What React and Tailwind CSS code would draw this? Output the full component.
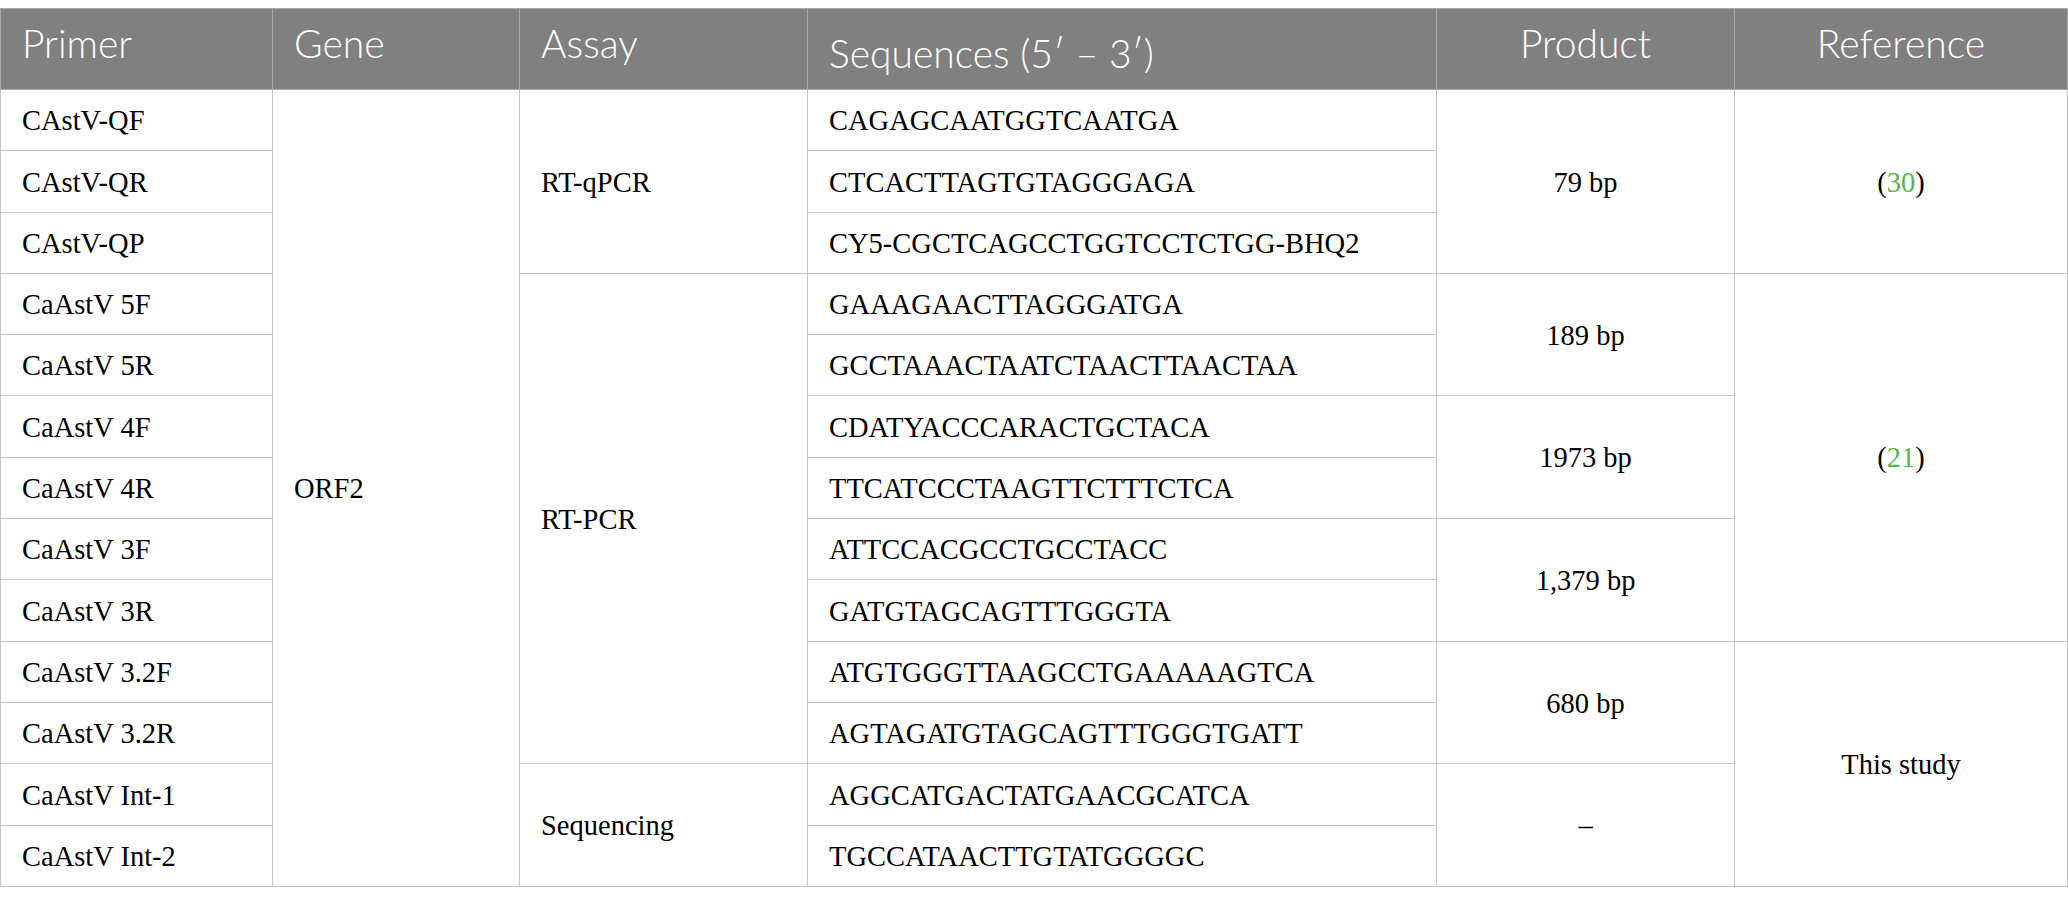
const rows = [
  { primer: "CAstV-QF", seq: "CAGAGCAATGGTCAATGA" },
  { primer: "CAstV-QR", seq: "CTCACTTAGTGTAGGGAGA" },
  { primer: "CAstV-QP", seq: "CY5-CGCTCAGCCTGGTCCTCTGG-BHQ2" },
  { primer: "CaAstV 5F", seq: "GAAAGAACTTAGGGATGA" },
  { primer: "CaAstV 5R", seq: "GCCTAAACTAATCTAACTTAACTAA" },
  { primer: "CaAstV 4F", seq: "CDATYACCCARACTGCTACA" },
  { primer: "CaAstV 4R", seq: "TTCATCCCTAAGTTCTTTCTCA" },
  { primer: "CaAstV 3F", seq: "ATTCCACGCCTGCCTACC" },
  { primer: "CaAstV 3R", seq: "GATGTAGCAGTTTGGGTA" },
  { primer: "CaAstV 3.2F", seq: "ATGTGGGTTAAGCCTGAAAAAGTCA" },
  { primer: "CaAstV 3.2R", seq: "AGTAGATGTAGCAGTTTGGGTGATT" },
  { primer: "CaAstV Int-1", seq: "AGGCATGACTATGAACGCATCA" },
  { primer: "CaAstV Int-2", seq: "TGCCATAACTTGTATGGGGC" },
];

// cells that start a span, keyed by row index
const assay = { 0: ["RT-qPCR", 3], 3: ["RT-PCR", 8], 11: ["Sequencing", 2] };
const product = {
  0: ["79 bp", 3],
  3: ["189 bp", 2],
  5: ["1973 bp", 2],
  7: ["1,379 bp", 2],
  9: ["680 bp", 2],
  11: ["–", 2],
};
const reference = {
  0: [<>(<span className="text-[#55b64e]">30</span>)</>, 3],
  3: [<>(<span className="text-[#55b64e]">21</span>)</>, 6],
  9: ["This study", 4],
};

const th = "border border-[#a9a9a9] bg-[#7f807f] text-white font-light align-top text-[39px] leading-[44px]";
const td = "border border-[#c4c4c4] h-[61.3px] align-middle pt-[3px] pb-0";

export default function App() {
  return (
    <div className="w-[2068px] h-[906px] bg-white pt-[8px]">
      <table
        className="w-[2067px] table-fixed border-collapse text-black"
        style={{ fontFamily: "'Liberation Serif', serif" }}
      >
        <colgroup>
          <col className="w-[272px]" />
          <col className="w-[247px]" />
          <col className="w-[288px]" />
          <col className="w-[629px]" />
          <col className="w-[298px]" />
          <col className="w-[333px]" />
        </colgroup>
        <thead style={{ fontFamily: "Lato, 'Open Sans', sans-serif" }}>
          <tr className="h-[81px]">
            <th className={`${th} text-left pl-[21px] pt-[12px]`}>Primer</th>
            <th className={`${th} text-left pl-[21px] pt-[12px]`}>Gene</th>
            <th className={`${th} text-left pl-[21px] pt-[12px]`}>Assay</th>
            <th className={`${th} text-left pl-[21px] pt-[22px]`}>Sequences (5′ – 3′)</th>
            <th className={`${th} text-center pt-[12px]`}>Product</th>
            <th className={`${th} text-center pt-[12px]`}>Reference</th>
          </tr>
        </thead>
        <tbody className="text-[28.5px]">
          {rows.map((r, i) => (
            <tr key={r.primer}>
              <td className={`${td} pl-[21px]`}>{r.primer}</td>
              {i === 0 && (
                <td rowSpan={13} className={`${td} pl-[21px]`}>
                  ORF2
                </td>
              )}
              {assay[i] && (
                <td rowSpan={assay[i][1]} className={`${td} pl-[21px]`}>
                  {assay[i][0]}
                </td>
              )}
              <td className={`${td} pl-[21px]`}>{r.seq}</td>
              {product[i] && (
                <td rowSpan={product[i][1]} className={`${td} text-center`}>
                  {product[i][0]}
                </td>
              )}
              {reference[i] && (
                <td rowSpan={reference[i][1]} className={`${td} text-center`}>
                  {reference[i][0]}
                </td>
              )}
            </tr>
          ))}
        </tbody>
      </table>
    </div>
  );
}
